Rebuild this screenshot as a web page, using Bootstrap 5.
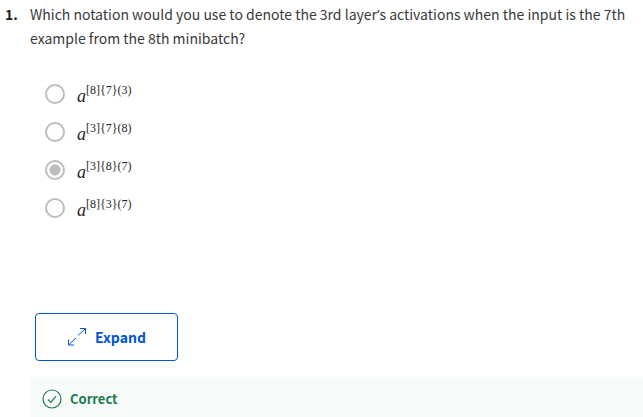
<!DOCTYPE html>
<html lang="en">
<head>
<meta charset="utf-8">
<meta name="viewport" content="width=device-width, initial-scale=1">
<title>Quiz question</title>
<link href="https://cdn.jsdelivr.net/npm/bootstrap@5.3.0/dist/css/bootstrap.min.css" rel="stylesheet">
<style>
  body {
    font-family: "Noto Sans CJK SC", "Noto Sans", sans-serif;
    font-size: 14px;
    line-height: 24px;
    color: #373a3c;
    background: #fff;
  }
  .question { padding: 2px 0 0 5px; }
  .question-number { flex: 0 0 25px; font-weight: 700; color: #1f1f1f; }
  .question-body { min-width: 0; }
  .prompt { margin: 0 0 25px; }
  .apostrophe { font-family: "Noto Sans", sans-serif; line-height: 1; }
  .answers { margin: 0; padding-left: 15px; }
  .answer { height: 38px; gap: 12px; }
  .answer .form-check-input {
    flex: none;
    width: 20px;
    height: 20px;
    margin: 0;
    border: 2px solid #bdbdbd;
    background: #fff;
    box-shadow: none;
  }
  .answer .form-check-input:checked {
    background: radial-gradient(circle, #bdbdbd 5px, #fff 6px);
  }
  .formula {
    padding-top: 4px;
    font-family: "Liberation Serif", serif;
    font-size: 18px;
    color: #1f1f1f;
  }
  .formula sup { font-size: 12px; top: -8px; }
  .expand-row { padding: 86px 0 16px 5px; }
  .btn-expand {
    --bs-btn-color: #0056d2;
    --bs-btn-border-color: #0056d2;
    --bs-btn-hover-bg: #f0f6ff;
    --bs-btn-hover-color: #0056d2;
    --bs-btn-hover-border-color: #0056d2;
    --bs-btn-padding-x: 31px;
    --bs-btn-padding-y: 11px;
    --bs-btn-font-size: 14px;
    --bs-btn-font-weight: 700;
    --bs-btn-line-height: 24px;
    --bs-btn-border-radius: 4px;
    gap: 8px;
  }
  .feedback {
    gap: 8px;
    padding: 10px 12px;
    font-size: 13px;
    font-weight: 700;
    color: #1d7c50;
    background: #f7fbf9;
  }
</style>
</head>
<body>
<main class="question d-flex">
  <div class="question-number">1.</div>
  <div class="question-body flex-grow-1">
    <form>
      <p class="prompt" id="prompt">Which notation would you use to denote the 3rd layer<span class="apostrophe">’</span>s activations when the input is the 7th example from the 8th minibatch?</p>
      <div class="answers" role="radiogroup" aria-labelledby="prompt">
        <div class="answer d-flex align-items-center">
          <input class="form-check-input" type="radio" name="answer" id="a1">
          <label class="formula" for="a1"><i>a</i><sup>[8]{7}(3)</sup></label>
        </div>
        <div class="answer d-flex align-items-center">
          <input class="form-check-input" type="radio" name="answer" id="a2">
          <label class="formula" for="a2"><i>a</i><sup>[3]{7}(8)</sup></label>
        </div>
        <div class="answer d-flex align-items-center">
          <input class="form-check-input" type="radio" name="answer" id="a3" checked>
          <label class="formula" for="a3"><i>a</i><sup>[3]{8}(7)</sup></label>
        </div>
        <div class="answer d-flex align-items-center">
          <input class="form-check-input" type="radio" name="answer" id="a4">
          <label class="formula" for="a4"><i>a</i><sup>[8]{3}(7)</sup></label>
        </div>
      </div>
      <div class="expand-row">
        <button type="button" class="btn btn-expand d-inline-flex align-items-center">
          <svg width="20" height="20" viewBox="0 0 20 20" fill="none" stroke="currentColor" aria-hidden="true">
            <path d="M11 8.500 18 2M13 1.500h5.500v5.500M9 11 2 17.500M1.500 12.500v5.500h5.500"/>
          </svg>
          Expand
        </button>
      </div>
    </form>
    <div class="feedback d-flex align-items-center" role="status">
      <svg width="20" height="20" viewBox="0 0 20 20" fill="none" stroke="currentColor" stroke-width="1.200" aria-hidden="true">
        <circle cx="10" cy="10" r="9"/>
        <path d="m6 10.500 2.800 2.800 5.200-6"/>
      </svg>
      Correct
    </div>
  </div>
</main>
<script src="https://cdn.jsdelivr.net/npm/bootstrap@5.3.0/dist/js/bootstrap.bundle.min.js"></script>
</body>
</html>
